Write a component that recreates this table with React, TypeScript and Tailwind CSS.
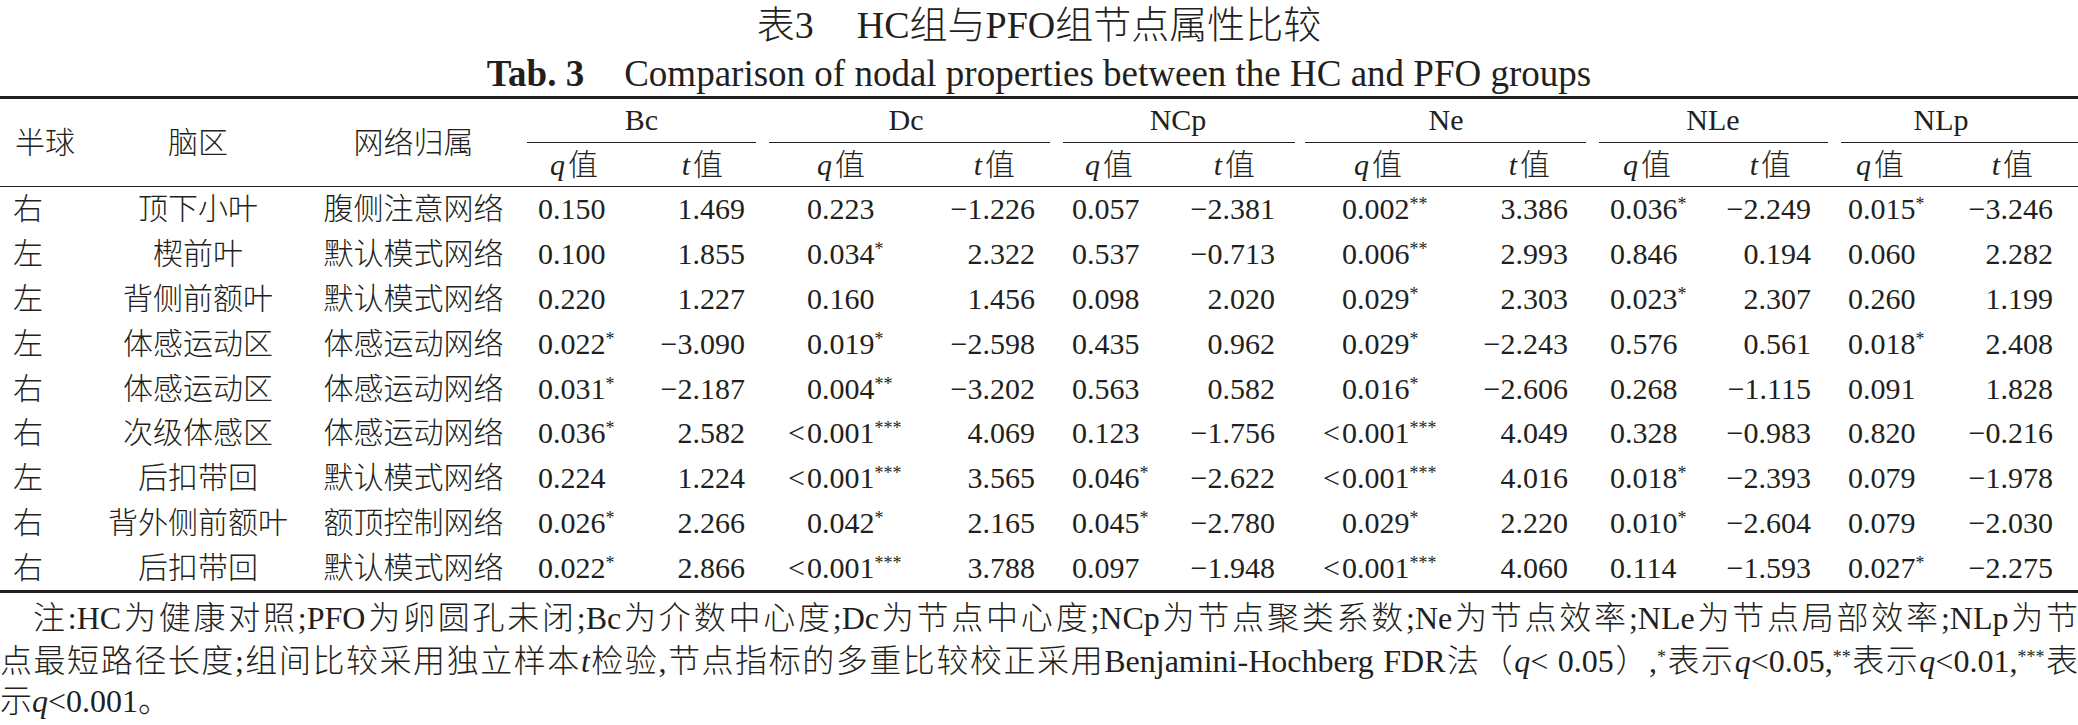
import React from "react";

// column tracks, measured on the 2078px page
const tracks =
  "grid grid-cols-[96px_204px_227px_114px_115px_154px_146px_120px_124px_145px_147px_121px_121px_107px_137px]";

// left padding of the q columns (digits start), right padding of the t columns
const qPad = ["pl-[11px]", "pl-[51px]", "pl-[16px]", "pl-[42px]", "pl-[18px]", "pl-[14px]"];
const tPad = ["pr-[11px]", "pr-[21px]", "pr-[25px]", "pr-[24px]", "pr-[23px]", "pr-[25px]"];
const qHead = ["pl-[23px]", "pl-[61px]", "pl-[29px]", "pl-[54px]", "pl-[31px]", "pl-[22px]"];
const tHead = ["pr-[33px]", "pr-[41px]", "pr-[45px]", "pr-[42px]", "pr-[43px]", "pr-[45px]"];

const groups = [
  { name: "Bc", line: "mx-0", text: "" },
  { name: "Dc", line: "ml-[13px] mr-[6px]", text: "" },
  { name: "NCp", line: "ml-[7px] mr-[5px]", text: "" },
  { name: "Ne", line: "ml-[5px] mr-[6px]", text: "" },
  { name: "NLe", line: "ml-[7px] mr-[6px]", text: "" },
  { name: "NLp", line: "ml-[7px] mr-0", text: "pr-[30px]" },
];

const rows: string[][] = [
  ["右", "顶下小叶", "腹侧注意网络", "0.150", "1.469", "0.223", "−1.226", "0.057", "−2.381", "0.002**", "3.386", "0.036*", "−2.249", "0.015*", "−3.246"],
  ["左", "楔前叶", "默认模式网络", "0.100", "1.855", "0.034*", "2.322", "0.537", "−0.713", "0.006**", "2.993", "0.846", "0.194", "0.060", "2.282"],
  ["左", "背侧前额叶", "默认模式网络", "0.220", "1.227", "0.160", "1.456", "0.098", "2.020", "0.029*", "2.303", "0.023*", "2.307", "0.260", "1.199"],
  ["左", "体感运动区", "体感运动网络", "0.022*", "−3.090", "0.019*", "−2.598", "0.435", "0.962", "0.029*", "−2.243", "0.576", "0.561", "0.018*", "2.408"],
  ["右", "体感运动区", "体感运动网络", "0.031*", "−2.187", "0.004**", "−3.202", "0.563", "0.582", "0.016*", "−2.606", "0.268", "−1.115", "0.091", "1.828"],
  ["右", "次级体感区", "体感运动网络", "0.036*", "2.582", "<0.001***", "4.069", "0.123", "−1.756", "<0.001***", "4.049", "0.328", "−0.983", "0.820", "−0.216"],
  ["左", "后扣带回", "默认模式网络", "0.224", "1.224", "<0.001***", "3.565", "0.046*", "−2.622", "<0.001***", "4.016", "0.018*", "−2.393", "0.079", "−1.978"],
  ["右", "背外侧前额叶", "额顶控制网络", "0.026*", "2.266", "0.042*", "2.165", "0.045*", "−2.780", "0.029*", "2.220", "0.010*", "−2.604", "0.079", "−2.030"],
  ["右", "后扣带回", "默认模式网络", "0.022*", "2.866", "<0.001***", "3.788", "0.097", "−1.948", "<0.001***", "4.060", "0.114", "−1.593", "0.027*", "−2.275"],
];

function Stars({ n }: { n: string }) {
  return <span className="text-[18px] align-[9px] leading-none">{n}</span>;
}

function QValue({ v }: { v: string }) {
  const less = v.startsWith("<");
  const body = v.replace("<", "").replace(/\*+$/, "");
  const stars = (v.match(/\*+$/) || [""])[0];
  return (
    <>
      {less && <span className="-ml-[19px] pr-[2px]">&lt;</span>}
      {body}
      {stars && <Stars n={stars} />}
    </>
  );
}

function SubHead({ letter }: { letter: string }) {
  return (
    <>
      <i>{letter}</i>
      <span className="ml-[3px]">值</span>
    </>
  );
}

export default function App() {
  return (
    <div className="w-[2078px] h-[725px] overflow-hidden bg-white text-[#231f20] font-light font-['Liberation_Serif','Noto_Sans_CJK_SC',serif]">
      {/* caption */}
      <div className="h-[50px] flex items-center justify-center text-[38px] leading-none">
        <span>表3</span>
        <span className="ml-[43px]">HC组与PFO组节点属性比较</span>
      </div>
      <div className="h-[46px] flex items-center justify-center text-[37px] leading-none">
        <span className="font-bold">Tab. 3</span>
        <span className="ml-[40px]">Comparison of nodal properties between the HC and PFO groups</span>
      </div>

      {/* table */}
      <div className="border-t-[3px] border-[#231f20] text-[30px] leading-none">
        <div className={`${tracks} border-b-[1.5px] border-[#231f20]`}>
          <div className="row-span-2 flex items-center pl-[15px]">半球</div>
          <div className="row-span-2 flex items-center justify-center">脑区</div>
          <div className="row-span-2 flex items-center justify-center">网络归属</div>
          {groups.map((g) => (
            <div key={g.name} className="col-span-2 h-[44px] flex flex-col">
              <div className={`flex-1 flex items-center justify-center ${g.text}`}>{g.name}</div>
              <div className={`h-[1.5px] bg-[#231f20] ${g.line}`} />
            </div>
          ))}
          {groups.map((g, i) => (
            <React.Fragment key={g.name + "s"}>
              <div className={`h-[43px] flex items-center ${qHead[i]}`}>
                <SubHead letter="q" />
              </div>
              <div className={`h-[43px] flex items-center justify-end ${tHead[i]}`}>
                <SubHead letter="t" />
              </div>
            </React.Fragment>
          ))}
        </div>

        <div className="border-b-[3px] border-[#231f20]">
          {rows.map((r, ri) => (
            <div key={ri} className={`${tracks} h-[44.8px] items-center`}>
              <div className="pl-[13px]">{r[0]}</div>
              <div className="text-center">{r[1]}</div>
              <div className="text-center">{r[2]}</div>
              {[0, 1, 2, 3, 4, 5].map((k) => (
                <React.Fragment key={k}>
                  <div className={`whitespace-nowrap ${qPad[k]}`}>
                    <QValue v={r[3 + k * 2]} />
                  </div>
                  <div className={`text-right whitespace-nowrap ${tPad[k]}`}>{r[4 + k * 2]}</div>
                </React.Fragment>
              ))}
            </div>
          ))}
        </div>
      </div>

      {/* notes */}
      <div className="pt-[4px] text-[32px] leading-none">
        <div className="h-[42px] flex items-center">
          <p className="w-full text-justify [text-align-last:justify] pl-[33px]">
            注:HC为健康对照;PFO为卵圆孔未闭;Bc为介数中心度;Dc为节点中心度;NCp为节点聚类系数;Ne为节点效率;NLe为节点局部效率;NLp为节
          </p>
        </div>
        <div className="h-[43px] flex items-center">
          <p className="w-full text-justify [text-align-last:justify]">
            点最短路径长度;组间比较采用独立样本<i>t</i>检验,节点指标的多重比较校正采用Benjamini-Hochberg FDR法（<i>q</i>&lt; 0.05）,
            <Stars n="*" />表示<i>q</i>&lt;0.05,<Stars n="**" />表示<i>q</i>&lt;0.01,<Stars n="***" />表
          </p>
        </div>
        <div className="h-[38px] flex items-center">
          <p>
            示<i>q</i>&lt;0.001。
          </p>
        </div>
      </div>
    </div>
  );
}
